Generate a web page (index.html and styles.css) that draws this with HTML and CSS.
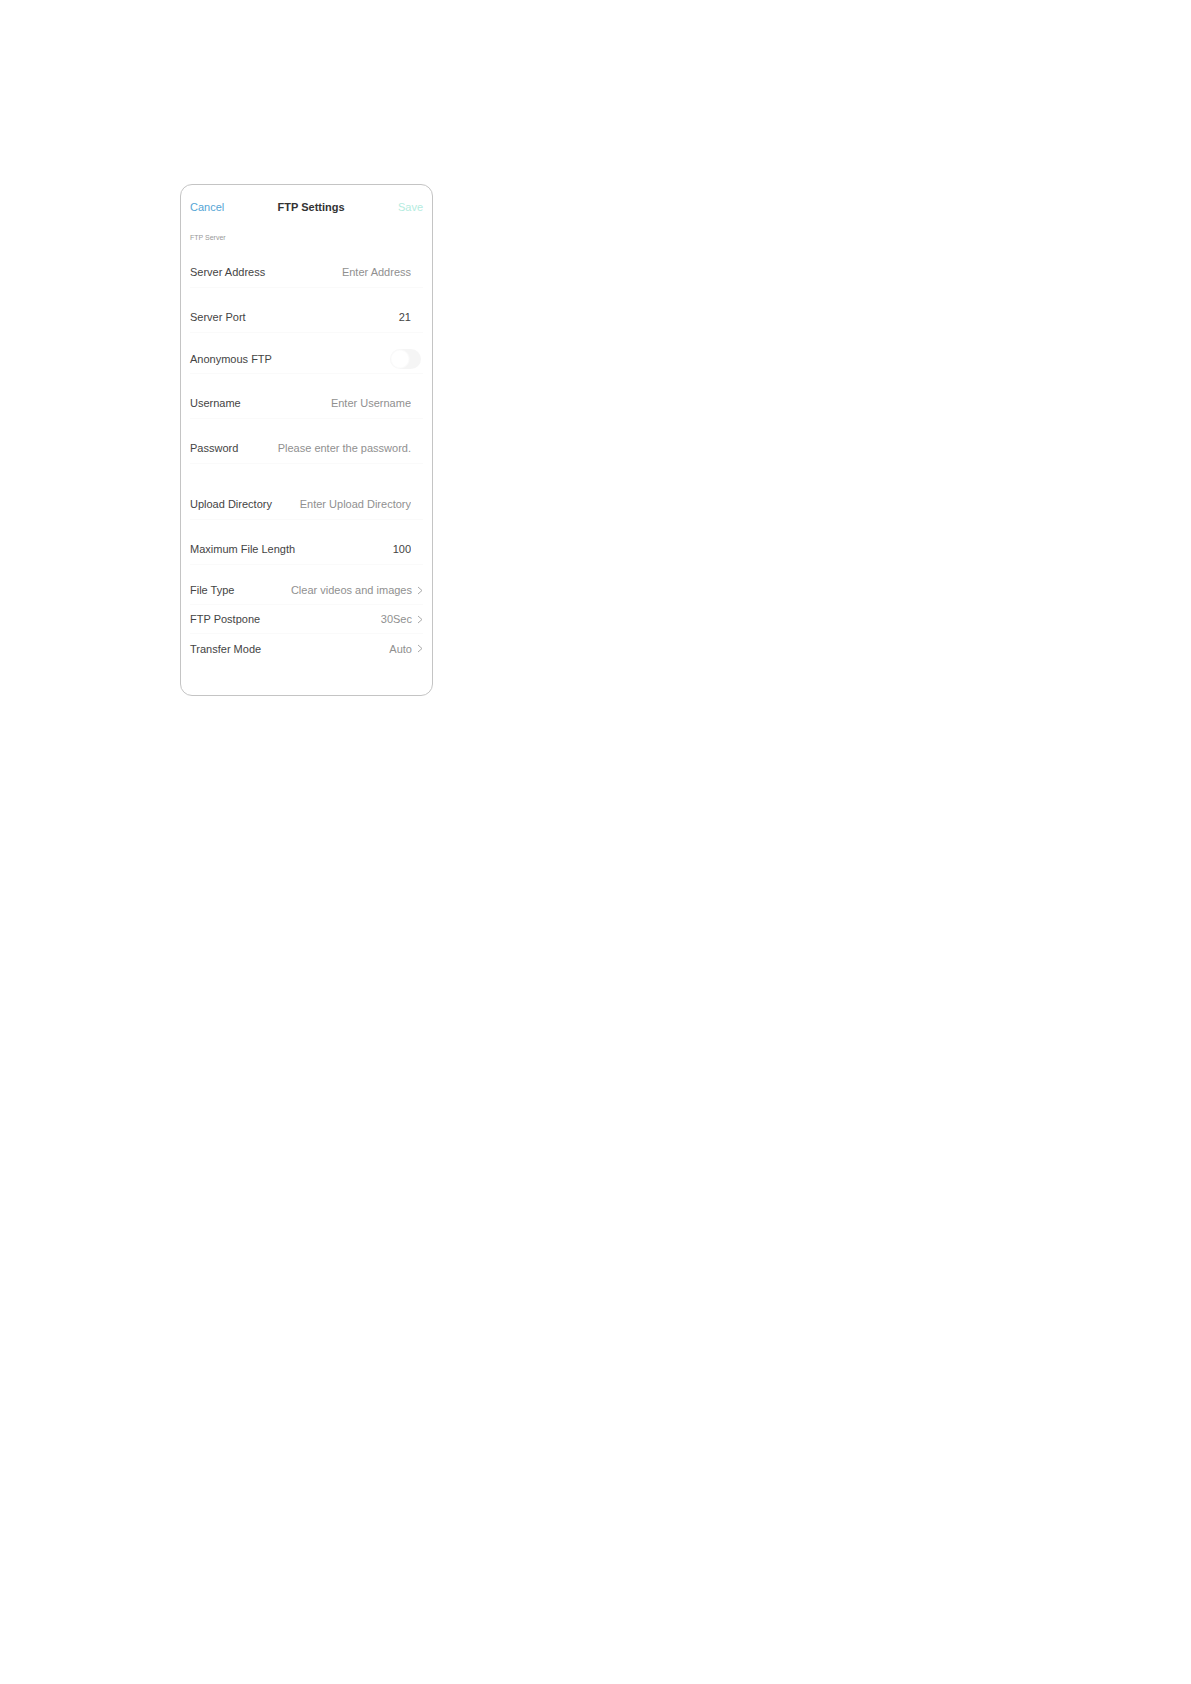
FILE: index.html
```html
<!DOCTYPE html>
<html lang="en">
<head>
  <meta charset="UTF-8">
  <meta name="viewport" content="width=device-width, initial-scale=1.0">
  <title>FTP Settings</title>
  <link rel="stylesheet" href="styles.css">
</head>
<body>
  <form class="settings">
    <header class="topbar">
      <button class="cancel" type="button">Cancel</button>
      <h1>FTP Settings</h1>
      <button class="save" type="submit">Save</button>
    </header>

    <h2>FTP Server</h2>

    <div class="row">
      <label for="address">Server Address</label>
      <input type="text" id="address" placeholder="Enter Address">
    </div>
    <div class="row">
      <label for="port">Server Port</label>
      <input type="text" id="port" value="21">
    </div>
    <div class="row switch-row">
      <label for="anonymous">Anonymous FTP</label>
      <input class="switch" type="checkbox" id="anonymous">
    </div>
    <div class="row">
      <label for="username">Username</label>
      <input type="text" id="username" placeholder="Enter Username">
    </div>
    <div class="row">
      <label for="password">Password</label>
      <input type="password" id="password" placeholder="Please enter the password.">
    </div>

    <div class="group">
      <div class="row">
        <label for="directory">Upload Directory</label>
        <input type="text" id="directory" placeholder="Enter Upload Directory">
      </div>
      <div class="row">
        <label for="length">Maximum File Length</label>
        <input type="text" id="length" value="100">
      </div>
    </div>

    <div class="links">
      <button class="link-row" type="button">
        <span>File Type</span>
        <span class="value">Clear videos and images</span>
        <svg class="chevron" viewBox="0 0 6 9"><path d="M1 1l4 3.500-4 3.500"/></svg>
      </button>
      <button class="link-row" type="button">
        <span>FTP Postpone</span>
        <span class="value">30Sec</span>
        <svg class="chevron" viewBox="0 0 6 9"><path d="M1 1l4 3.500-4 3.500"/></svg>
      </button>
      <button class="link-row" type="button">
        <span>Transfer Mode</span>
        <span class="value">Auto</span>
        <svg class="chevron" viewBox="0 0 6 9"><path d="M1 1l4 3.500-4 3.500"/></svg>
      </button>
    </div>
  </form>
</body>
</html>
```
FILE: styles.css
```css
* {
  box-sizing: border-box;
}

body {
  margin: 0;
  padding: 184px 180px;
  background-color: white;
  font-family: "Liberation Sans", Arial, sans-serif;
  font-size: 11px;
  color: #444;
}

.settings {
  max-width: 253px;
  padding: 0 9px 32px;
  border: 1px solid #c4c4c4;
  border-radius: 12px;
}

button, input {
  border: none;
  padding: 0;
  background: none;
  font: inherit;
  color: inherit;
}

.topbar {
  display: flex;
  align-items: center;
  height: 44px;
}

h1 {
  flex: 1;
  margin: 0;
  text-align: center;
  font-size: 11px;
  font-weight: 600;
  color: #333;
}

.cancel {
  color: #55a5d5;
}

.save {
  color: #b5ece0;
}

h2 {
  margin: 0;
  padding-top: 4px;
  height: 14px;
  line-height: 10px;
  font-size: 7px;
  font-weight: 400;
  color: #999;
}

.row {
  display: flex;
  align-items: center;
  height: 45px;
  padding: 14px 12px 0 0;
  border-bottom: 1px solid #fafafa;
}

.row label {
  white-space: nowrap;
}

.row input {
  flex: 1;
  min-width: 0;
  text-align: right;
}

.row input::placeholder {
  color: #909090;
}

.switch-row {
  height: 41px;
  padding: 12px 2px 0 0;
  justify-content: space-between;
}

.row .switch {
  appearance: none;
  flex: none;
  width: 31px;
  height: 20px;
  margin: 0;
  border-radius: 10px;
  background: radial-gradient(circle at 10px 10px, white 8px, #f5f5f5 10px);
}

.row .switch:checked {
  background: radial-gradient(circle at 21px 10px, white 8px, #b5ece0 10px);
}

.group {
  margin-top: 11px;
}

.links {
  margin-top: 11px;
}

.link-row {
  display: flex;
  align-items: center;
  width: 100%;
  height: 29px;
  border-bottom: 1px solid #fafafa;
  text-align: left;
}

.link-row:last-child {
  border-bottom: none;
}

.value {
  flex: 1;
  text-align: right;
  color: #909090;
}

.chevron {
  width: 6px;
  height: 9px;
  margin-left: 5px;
  fill: none;
  stroke: #aaa;
}
```
